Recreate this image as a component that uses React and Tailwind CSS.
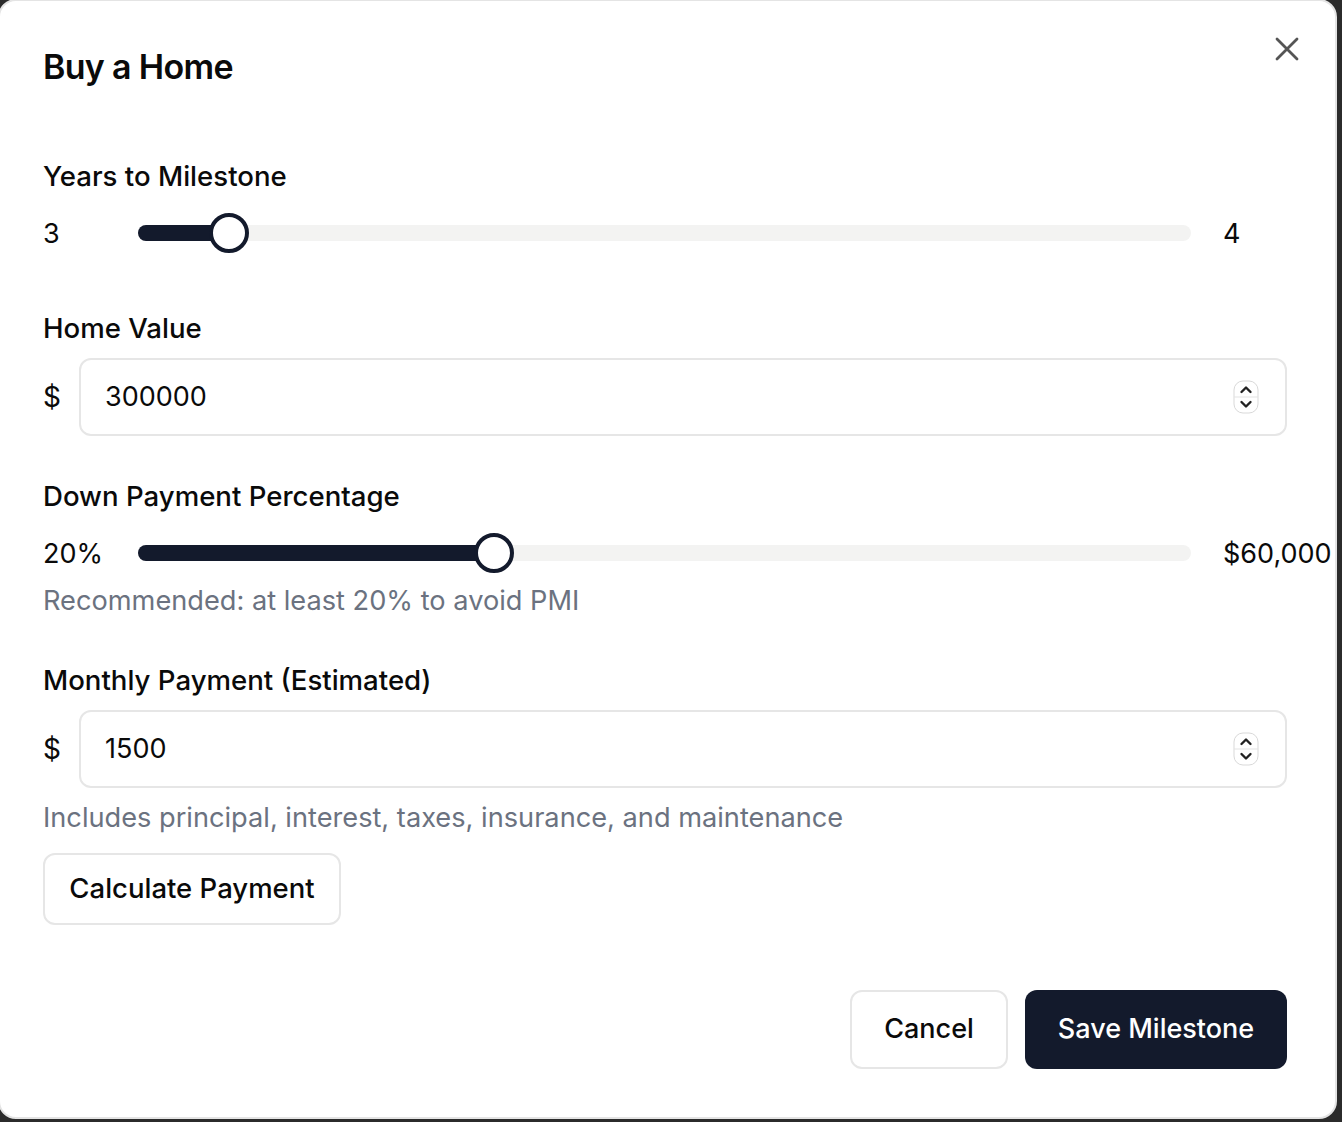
import React from "react";

const font = { fontFamily: "Inter, 'Noto Sans', sans-serif" };

function Slider({ left, right, pct }) {
  return (
    <div className="flex items-center h-[40px] mt-[17px]">
      <div className="w-[64px] shrink-0 text-[27px] text-[#0a0a0a] leading-none">{left}</div>
      <div className="ml-[31px] flex-1 relative h-[16px] rounded-full bg-[#f3f3f2]">
        <div className="absolute left-0 top-0 h-full rounded-full bg-[#131a2c]" style={{ width: pct + "%" }} />
        <div
          className="absolute top-1/2 w-[40px] h-[40px] -translate-x-1/2 -translate-y-1/2 rounded-full bg-white border-[4px] border-[#131a2c]"
          style={{ left: pct + "%" }}
        />
      </div>
      <div className="ml-[32px] w-[64px] shrink-0 text-[27px] text-[#0a0a0a] leading-none whitespace-nowrap">{right}</div>
    </div>
  );
}

function Spinner() {
  return (
    <svg width="26" height="34" viewBox="0 0 26 34" className="shrink-0">
      <rect x="1" y="1" width="24" height="32" rx="9" fill="white" stroke="#d9d9d9" strokeWidth="1" />
      <line x1="1" y1="17" x2="25" y2="17" stroke="#e3e3e3" strokeWidth="1" />
      <path d="M8.5 12 L13 7.5 L17.5 12" fill="none" stroke="#222" strokeWidth="2.4" strokeLinecap="round" strokeLinejoin="round" />
      <path d="M8.5 22 L13 26.5 L17.5 22" fill="none" stroke="#222" strokeWidth="2.4" strokeLinecap="round" strokeLinejoin="round" />
    </svg>
  );
}

function MoneyInput({ value }) {
  return (
    <div className="flex items-center mt-[10px]">
      <div className="w-[36px] shrink-0 text-[28px] text-[#0a0a0a] leading-none">$</div>
      <div className="flex-1 h-[78px] rounded-[12px] border-2 border-[#e6e6e6] flex items-center pl-[24px] pr-[26px]">
        <div className="flex-1 text-[27px] text-[#0a0a0a]">{value}</div>
        <Spinner />
      </div>
    </div>
  );
}

function Label({ children, mt }) {
  return <div className={`text-[27.6px] font-medium text-[#0a0a0a] leading-[40px] ${mt}`}>{children}</div>;
}

export default function App() {
  return (
    <div className="w-[1342px] h-[1122px] bg-[#2b2b2b] overflow-hidden" style={font}>
      <div className="relative -ml-[2px] -mt-[1px] w-[1339px] h-[1120px] bg-white rounded-[18px] border-2 border-[#e4e4e4] pl-[43px] pr-[48px] pt-[46px]">
        <button className="absolute right-[35px] top-[35px] w-[26px] h-[26px] flex items-center justify-center">
          <svg width="26" height="26" viewBox="0 0 26 26">
            <path d="M3 3 L23 23 M23 3 L3 23" stroke="#555" strokeWidth="2.8" strokeLinecap="round" />
          </svg>
        </button>
        <div className="text-[34px] font-semibold tracking-[-0.02em] text-[#0a0a0a] leading-[40px]">Buy a Home</div>

        <Label mt="mt-[69px]">Years to Milestone</Label>
        <Slider left="3" right="4" pct={8.6} />

        <Label mt="mt-[55px]">Home Value</Label>
        <MoneyInput value="300000" />

        <Label mt="mt-[40px]">Down Payment Percentage</Label>
        <Slider left="20%" right="$60,000" pct={33.8} />
        <div className="mt-[8px] text-[27.2px] text-[#6b7280] leading-[40px]">Recommended: at least 20% to avoid PMI</div>

        <Label mt="mt-[39px]">Monthly Payment (Estimated)</Label>
        <MoneyInput value="1500" />
        <div className="mt-[10px] text-[27.2px] text-[#6b7280] leading-[40px]">Includes principal, interest, taxes, insurance, and maintenance</div>

        <button className="mt-[15px] h-[72px] w-[298px] rounded-[12px] border-2 border-[#e6e6e6] bg-white text-[27.5px] font-medium text-[#0a0a0a]">
          Calculate Payment
        </button>

        <div className="flex justify-end gap-[17px] mt-[65px]">
          <button className="h-[79px] w-[158px] rounded-[12px] border-2 border-[#e6e6e6] bg-white text-[27px] font-medium text-[#0a0a0a]">
            Cancel
          </button>
          <button className="h-[79px] w-[262px] rounded-[12px] bg-[#131a2c] text-[27px] font-medium text-white">
            Save Milestone
          </button>
        </div>
      </div>
    </div>
  );
}
